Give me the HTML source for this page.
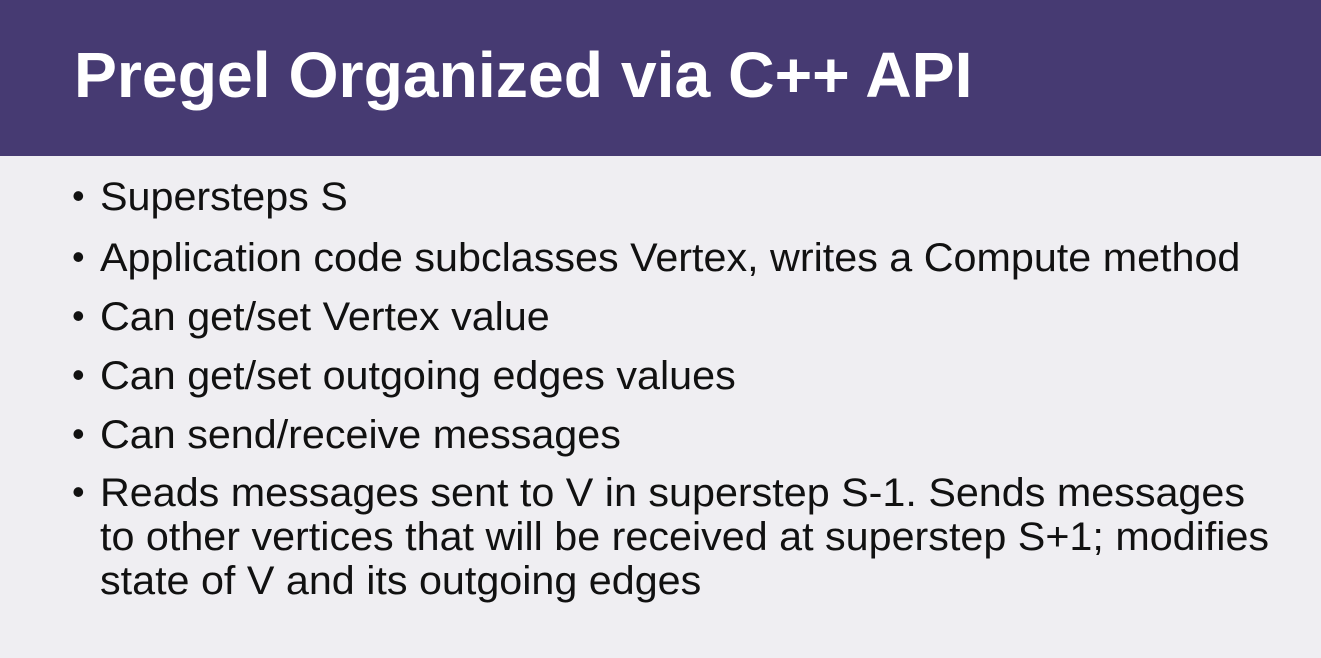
<!DOCTYPE html>
<html><head><style>
html,body{margin:0;padding:0}
body{width:1321px;height:658px;background:#efeef2;position:relative;overflow:hidden;font-family:"Liberation Sans",sans-serif;}
.hdr{position:absolute;left:0;top:0;width:1321px;height:156px;background:#463a72;}
.title{position:absolute;left:74px;top:38px;font-size:64px;font-weight:bold;color:#fff;line-height:74px;white-space:nowrap;transform:scaleX(1.005);transform-origin:0 0;}
.l{position:absolute;left:100px;font-size:40px;line-height:44px;color:#111;white-space:nowrap;transform:scaleX(1.032);transform-origin:0 0;}
.b{position:absolute;left:72px;font-size:36px;line-height:44px;color:#111;}
</style></head><body>
<div class="hdr"></div>
<div class="title">Pregel Organized via C++ API</div>
<div class="b" style="top:174px">•</div><div class="l" style="top:175px">Supersteps S</div>
<div class="b" style="top:235px">•</div><div class="l" style="top:236px">Application code subclasses Vertex, writes a Compute method</div>
<div class="b" style="top:294px">•</div><div class="l" style="top:295px">Can get/set Vertex value</div>
<div class="b" style="top:353px">•</div><div class="l" style="top:354px">Can get/set outgoing edges values</div>
<div class="b" style="top:412px">•</div><div class="l" style="top:413px">Can send/receive messages</div>
<div class="b" style="top:470px">•</div><div class="l" style="top:471px">Reads messages sent to V in superstep S-1. Sends messages</div>
<div class="l" style="top:515px">to other vertices that will be received at superstep S+1; modifies</div>
<div class="l" style="top:559px">state of V and its outgoing edges</div>
</body></html>
